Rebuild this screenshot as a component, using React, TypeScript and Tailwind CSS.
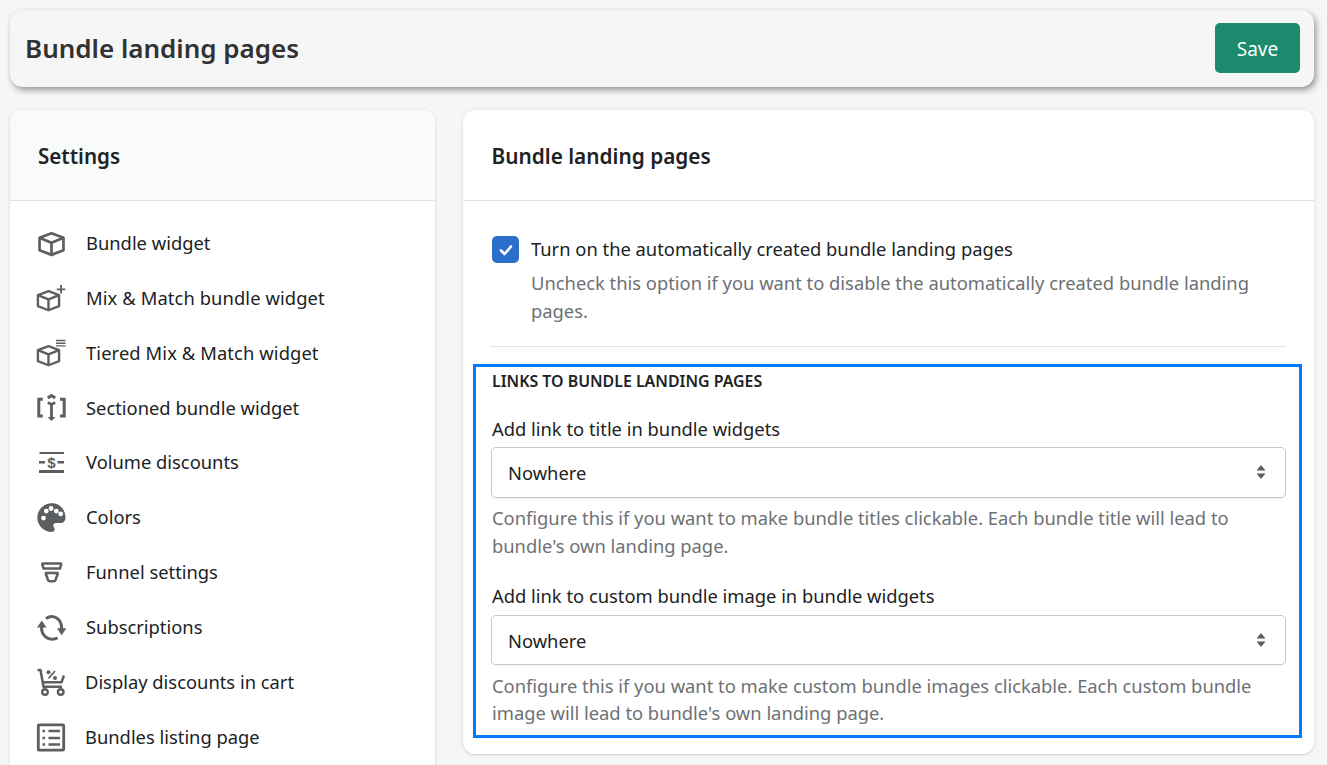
import type { ReactNode } from "react";

const gray = "#5c5f62";

/* ─── Sidebar icons ───────────────────────────────── */

function Cube({ x = 0, y = 0, s = 1 }: { x?: number; y?: number; s?: number }) {
  return (
    <g transform={`translate(${x} ${y}) scale(${s})`} fill="none" stroke={gray} strokeWidth="2.6" strokeLinejoin="round">
      <path d="M12.500 1.300 24 5.500V17.500L12.500 22 1 17.500V5.500Z" />
      <path d="M1 5.500 12.500 10.300 24 5.500M12.500 10.300V22" />
    </g>
  );
}

const icons: Record<string, ReactNode> = {
  cube: <Cube x={1.5} y={3} s={1.04} />,
  plus: (
    <>
      <Cube x={1} y={6} s={0.92} />
      <path d="M25 1V9.500M20.800 5.300H29.300" stroke={gray} strokeWidth="1.800" fill="none" />
    </>
  ),
  tier: (
    <>
      <Cube x={1} y={7} s={0.92} />
      <path d="M20 2.500H29.500M20 5.200H29.500M20 7.900H29.500" stroke={gray} strokeWidth="1.400" fill="none" />
    </>
  ),
  section: (
    <>
      <path d="M6.800 6.300H2.800V23H6.800M24 6.300H28.200V23H24" fill="none" stroke={gray} strokeWidth="3" />
      <path d="M11.800 5 15.500 2.500 19.200 5M11.800 9.500 15.500 11.500 19.200 9.500M15.500 11V25" fill="none" stroke={gray} strokeWidth="2.800" />
      <path d="M11.500 24H19.500L15.500 28Z" fill={gray} />
    </>
  ),
  volume: (
    <>
      <path d="M3.500 5H28" stroke={gray} strokeWidth="2" fill="none" />
      <path d="M3 23.500H28" stroke={gray} strokeWidth="3" fill="none" />
      <path d="M3 14.300H9M21.500 14.300H28" stroke={gray} strokeWidth="2.600" fill="none" />
      <text x="15.500" y="19.800" textAnchor="middle" fontSize="15" fontWeight="700" fill={gray} fontFamily="'Liberation Sans', sans-serif">$</text>
    </>
  ),
  palette: (
    <path
      fill={gray}
      fillRule="evenodd"
      transform="translate(1 0)"
      d="M15 .3C7 .3.3 6.500.3 14.500S7 29 14.500 29c2.200 0 3.200-1.400 3.200-2.800 0-1.800-1.400-2.400-1.400-3.800 0-1.400 1.100-2.300 2.600-2.300h4.200c3.500 0 5.400-2.400 5.400-5.400C28.500 6.500 22.500.3 15 .3ZM6.500 17.500a2.400 2.400 0 1 1 0-4.800 2.400 2.400 0 0 1 0 4.800Zm2.800-7a2.400 2.400 0 1 1 0-4.800 2.400 2.400 0 0 1 0 4.800Zm10 0a2.400 2.400 0 1 1 0-4.800 2.400 2.400 0 0 1 0 4.800Zm-5.200-2.600a2.400 2.400 0 1 1 0-4.800 2.400 2.400 0 0 1 0 4.800Zm9.600 5.400a2.400 2.400 0 1 1 0-4.800 2.400 2.400 0 0 1 0 4.800Z"
    />
  ),
  funnel: (
    <>
      <path d="M7 5.500H24.500Q25.500 5.500 25 7L24 10.500H7.500L6.500 7Q6 5.500 7 5.500Z" fill="none" stroke={gray} strokeWidth="2.600" strokeLinejoin="round" />
      <path d="M9 15H22.500" stroke={gray} strokeWidth="2.600" fill="none" />
      <path d="M9.500 15 12 22Q12.500 23.300 14 23.300H17.500Q19 23.300 19.500 22L22 15" fill="none" stroke={gray} strokeWidth="2.600" />
    </>
  ),
  sync: (
    <>
      <path d="M5.800 13C4.500 20 9.500 26 16 26.200 18 26.200 20 25.700 21.500 24.800" fill="none" stroke={gray} strokeWidth="3" />
      <path d="M10 5.500C17 .5 26 5.500 25.600 16" fill="none" stroke={gray} strokeWidth="3" />
      <path d="M1 14.500 5.800 7.500 10.500 14.500ZM21 15.200H30.300L25.600 22.300Z" fill={gray} />
    </>
  ),
  cart: (
    <>
      <path d="M1.500 2H4.500L7.500 18.700H26" fill="none" stroke={gray} strokeWidth="2.500" strokeLinejoin="round" />
      <path d="M28 7.500 25.500 14.300H6.800" fill="none" stroke={gray} strokeWidth="2.500" />
      <circle cx="9" cy="24" r="2.800" fill="none" stroke={gray} strokeWidth="2.400" />
      <circle cx="24.700" cy="24" r="2.800" fill="none" stroke={gray} strokeWidth="2.400" />
      <path d="M12.500 10.500 19 3" stroke={gray} strokeWidth="1.700" fill="none" />
      <circle cx="12.500" cy="4.200" r="2" fill={gray} />
      <circle cx="19" cy="10" r="2" fill={gray} />
    </>
  ),
  list: (
    <>
      <rect x="2.300" y="1.800" width="25.400" height="25.400" rx="1" fill="none" stroke={gray} strokeWidth="2.800" />
      <path d="M6.500 8H9M6.500 15H9M6.500 21.500H9M12.500 8H24M12.500 15H24M12.500 21.500H24" fill="none" stroke={gray} strokeWidth="2.300" />
    </>
  ),
};

const navItems = [
  { icon: "cube", label: "Bundle widget", icn: "ml-[27px]", gap: "ml-[19px]" },
  { icon: "plus", label: "Mix & Match bundle widget", icn: "ml-[26px]", gap: "ml-5 tracking-[0.1px]" },
  { icon: "tier", label: "Tiered Mix & Match widget", icn: "ml-[26px]", gap: "ml-5 tracking-[0.1px]" },
  { icon: "section", label: "Sectioned bundle widget", icn: "ml-[26px]", gap: "ml-5" },
  { icon: "volume", label: "Volume discounts", icn: "ml-[26px]", gap: "ml-5" },
  { icon: "palette", label: "Colors", icn: "ml-[26px]", gap: "ml-5" },
  { icon: "funnel", label: "Funnel settings", icn: "ml-[26px]", gap: "ml-5" },
  { icon: "sync", label: "Subscriptions", icn: "ml-[26px]", gap: "ml-5" },
  { icon: "cart", label: "Display discounts in cart", icn: "ml-[26px]", gap: "ml-[19px]" },
  { icon: "list", label: "Bundles listing page", icn: "ml-[26px]", gap: "ml-[19px]" },
];

function SelectBox({ height }: { height: string }) {
  return (
    <div className={`flex ${height} items-center justify-between rounded-[5px] border border-[#c4c7ca] bg-white pl-4 pr-[19px] shadow-[0_1px_1px_rgba(0,0,0,0.05)]`}>
      <span className="pt-[2px]">Nowhere</span>
      <svg width="10" height="16" viewBox="0 0 10 16" fill="#5c5f62">
        <path d="M5 1 9.500 6.500H.5ZM5 15 .5 9.500H9.500Z" />
      </svg>
    </div>
  );
}

export default function App() {
  return (
    <div className="h-[765px] w-[1327px] overflow-hidden bg-[#f6f6f7] px-[10px] pt-[10px] font-['Noto_Sans',sans-serif] text-[18.35px] text-[#202223]">
      {/* Header */}
      <div className="flex h-[77px] w-[1304px] items-center justify-between rounded-[13px] bg-[#f6f6f6] pb-[2px] pl-[15px] pr-[14px] shadow-[2px_3px_6px_rgba(0,0,0,0.4)]">
        <h1 className="mt-[2px] text-[26px] font-semibold text-[#303233]">Bundle landing pages</h1>
        <button type="button" className="flex h-[50px] w-[85px] items-center justify-center rounded-[5px] bg-[#1c8a6d] pt-[3px] text-[19px] text-white">
          Save
        </button>
      </div>

      <div className="mt-[23px] flex gap-[28px]">
        {/* Settings nav */}
        <div className="h-[700px] w-[425px] shrink-0 overflow-hidden rounded-xl bg-white shadow-[0_0_5px_rgba(23,24,24,0.08),0_1px_2px_rgba(0,0,0,0.1)]">
          <div className="flex h-[91px] items-center border-b border-[#e1e3e5] bg-[#f9fafa] pl-7 pt-[2px]">
            <h2 className="text-[20.600px] font-semibold">Settings</h2>
          </div>
          <div className="pt-[15.2px]">
            {navItems.map((item) => (
              <div key={item.label} className="flex h-[54.9px] items-center">
                <svg width="30" height="30" viewBox="0 0 30 30" className={`${item.icn} shrink-0`}>
                  {icons[item.icon]}
                </svg>
                <span className={`${item.gap} mb-[2px]`}>{item.label}</span>
              </div>
            ))}
          </div>
        </div>

        {/* Main panel */}
        <div className="h-[644px] w-[851px] shrink-0 rounded-xl bg-white shadow-[0_0_5px_rgba(23,24,24,0.08),0_1px_2px_rgba(0,0,0,0.1)]">
          <div className="flex h-[91px] items-center border-b border-[#e1e3e5] pl-[28.5px] pt-1">
            <h2 className="text-[20.800px] font-semibold">Bundle landing pages</h2>
          </div>
          <div className="px-[10px] pt-[34px]">
            <div className="ml-[17px] mr-[18px] border-b border-[#e1e3e5] pb-[20px]">
              <div className="ml-[2px] flex">
                <span className="mt-px flex h-[27px] w-[27px] shrink-0 items-center justify-center rounded-[5px] bg-[#2c6ecb]">
                  <svg width="16" height="16" viewBox="0 0 16 16" fill="none" stroke="#fff" strokeWidth="2.600" strokeLinecap="round" strokeLinejoin="round">
                    <path d="M3 8.500 6.500 12 13 4.500" />
                  </svg>
                </span>
                <div className="ml-3 leading-[28.500px]">
                  <div>Turn on the automatically created bundle landing pages</div>
                  <div className="mt-[5px] text-[#6d7175]">
                    Uncheck this option if you want to disable the automatically created bundle landing pages.
                  </div>
                </div>
              </div>
            </div>

            {/* Highlighted section */}
            <div className="mt-[17px] h-[374px] w-[829px] border-[3px] border-[#007bff] pl-[15px] pr-[13px]">
              <div className="pl-px pt-[2px] text-[15.900px] font-semibold leading-[24px]">LINKS TO BUNDLE LANDING PAGES</div>
              <div className="mt-[23px] pl-px leading-[26px]">Add link to title in bundle widgets</div>
              <div className="mt-[5px]"><SelectBox height="h-[51px]" /></div>
              <div className="mt-[6px] pl-px leading-[28px] text-[#6d7175]">
                Configure this if you want to make bundle titles clickable. Each bundle title will lead to bundle's own landing page.
              </div>
              <div className="mt-[23.5px] pl-px leading-[26px]">Add link to custom bundle image in bundle widgets</div>
              <div className="mt-[6px]"><SelectBox height="h-[50px]" /></div>
              <div className="mt-[7px] pl-px leading-[27px] text-[#6d7175]">
                Configure this if you want to make custom bundle images clickable. Each custom bundle image will lead to bundle's own landing page.
              </div>
            </div>
          </div>
        </div>
      </div>
    </div>
  );
}
